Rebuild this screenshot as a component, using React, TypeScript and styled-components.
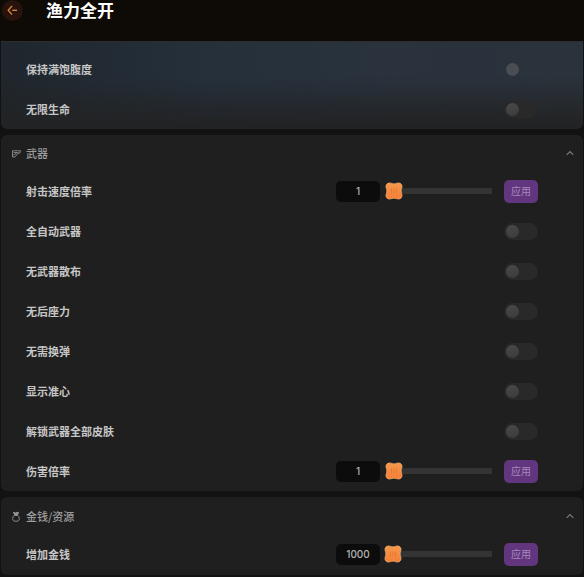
import React, { useId, useState } from 'react';
import styled, { createGlobalStyle } from 'styled-components';

const GlobalStyle = createGlobalStyle`
  * { box-sizing: border-box; }
  body {
    margin: 0;
    background: #121212;
    color: #c6c6c6;
    font-family: "Noto Sans CJK SC", sans-serif;
    font-size: 11px;
  }
  button, input { font: inherit; color: inherit; }
`;

const Page = styled.main`
  display: flex;
  flex-direction: column;
`;

const Header = styled.header`
  display: flex;
  align-items: flex-start;
  gap: 23px;
  height: 41px;
  padding-left: 2px;
  background: #0e0a06;
`;

const BackButton = styled.button`
  display: grid;
  place-items: center;
  width: 21px;
  height: 21px;
  padding: 0;
  border: 0;
  border-radius: 50%;
  background: #27120c;
  color: #d98038;
`;

const Title = styled.h1`
  margin: 0;
  color: #fff;
  font-size: 17px;
  font-weight: 700;
  line-height: 20px;
`;

const Panels = styled.div`
  display: flex;
  flex-direction: column;
  gap: 6px;
  padding: 0 1px 2px;
`;

const Panel = styled.section`
  border-radius: 6px;
  background: #1f1f1f;

  &:last-child { padding: 1px 0; }
`;

const GlowPanel = styled(Panel)`
  padding-top: 8px;
  border-radius: 0 0 6px 6px;
  background:
    linear-gradient(#2d2d2f, #2d2d2f) top / 100% 1px no-repeat,
    linear-gradient(to bottom, transparent 40%, #222324 95%),
    linear-gradient(to right, #1f262d, #25303b 35%, #29323d 65%, #2a323b);
`;

const PanelHeading = styled.h2`
  display: flex;
  align-items: center;
  height: 36px;
  margin: 0;
  padding: 0 9px 0 10px;
  color: #9c9c9c;
  font-size: 11px;
  font-weight: 500;
`;

const HeadingLabel = styled.span`
  flex: 1;
  margin-left: 5px;
`;

const CollapseButton = styled.button`
  display: grid;
  padding: 0;
  border: 0;
  background: none;
  color: #7d7d7d;
`;

const Row = styled.div`
  display: flex;
  align-items: center;
  justify-content: space-between;
  height: 40px;
  padding: 0 45px 0 25px;
`;

const RowLabel = styled.label`
  color: #c6c6c6;
  font-weight: 700;
  line-height: 16px;
`;

const Controls = styled.div`
  display: flex;
  align-items: center;
`;

const ValueInput = styled.input`
  width: 44px;
  height: 21px;
  padding: 0;
  border: 0;
  border-radius: 5px;
  background: #0c0c0c;
  color: #b4b4b4;
  font-family: Inter, sans-serif;
  font-size: 10px;
  font-weight: 500;
  text-align: center;
`;

const SliderBox = styled.div`
  position: relative;
  display: flex;
  align-items: center;
  width: 108px;
  height: 18px;
  margin: 0 12px 0 4px;
`;

const Range = styled.input`
  appearance: none;
  width: 100%;
  height: 18px;
  margin: 0;
  background: linear-gradient(#343434, #343434) right / 98px 6px no-repeat;

  &::-webkit-slider-thumb {
    appearance: none;
    width: 18px;
    height: 18px;
    background: transparent;
  }
`;

const Thumb = styled.svg`
  position: absolute;
  top: 0;
  pointer-events: none;
`;

const ApplyButton = styled.button`
  width: 34px;
  height: 23px;
  padding: 0;
  border: 0;
  border-radius: 5px;
  background: #61367f;
  color: #a988bb;
  font-size: 10px;
  line-height: 20px;
`;

const Switch = styled.input<{ $bare?: boolean }>`
  appearance: none;
  display: flex;
  align-items: center;
  width: 34px;
  height: 17px;
  margin: 0;
  padding: 0 2px;
  border-radius: 9px;
  background: ${({ $bare }) => ($bare ? 'transparent' : '#292929')};

  &::before {
    content: "";
    width: 13px;
    height: 13px;
    border-radius: 50%;
    background: ${({ $bare }) => ($bare ? '#4a4d51' : 'linear-gradient(160deg, #4a4a4b, #3b3b3c)')};
  }
  &:checked { justify-content: flex-end; }
`;

const BackIcon = () => (
  <svg width="11" height="11" viewBox="0 0 11 11" fill="none" stroke="currentColor" strokeWidth="1.4" aria-hidden="true">
    <path d="M5 1 1.2 5.2 5 9.6" />
    <path d="M5.2 5.3H10" />
  </svg>
);

const GunIcon = () => (
  <svg width="10" height="9" viewBox="0 0 10 9" fill="none" stroke="currentColor" strokeWidth=".8" aria-hidden="true">
    <path d="M1.5 1.8h8L9 3.9 6.8 4.500 4 8H1.5z" />
    <path d="M2.500 3.6h5M3.200 5.8 5.6 4M2.200 5.4v1.2" />
  </svg>
);

const MoneyIcon = () => (
  <svg width="10" height="11" viewBox="0 0 10 11" fill="none" stroke="currentColor" strokeWidth=".9" aria-hidden="true">
    <path d="M3.2 4.5C1.8 5.5 1.6 7 1.8 8.4 2 9.7 2.8 10.2 5 10.2s3-.5 3.2-1.8c.2-1.4 0-2.9-1.4-3.9z" />
    <path d="M2.6 1.2 4.4 2 7.4 1.2 6.9 3.4H3.3z" fill="currentColor" />
  </svg>
);

const ChevronIcon = () => (
  <svg width="8" height="6" viewBox="0 0 8 6" fill="none" stroke="currentColor" strokeWidth="1.1" aria-hidden="true">
    <path d="M.7 4.8 4 1.5l3.3 3.3" />
  </svg>
);

function SliderThumb({ percent }: { percent: number }) {
  const gradient = useId();
  return (
    <Thumb width="18" height="18" viewBox="0 0 18 18" style={{ left: `calc((100% - 18px) * ${percent / 100})` }} aria-hidden="true">
      <defs>
        <linearGradient id={gradient} x1="0" y1="0" x2="0" y2="1">
          <stop offset="0" stopColor="#f6984c" />
          <stop offset="1" stopColor="#f47f38" />
        </linearGradient>
      </defs>
      <path
        d="M4.3 1C6 .8 7 1.9 9 1.9S12 .8 13.7 1C15.8 1.2 17 2.6 17 4.5c0 1.7-.9 2.5-.9 4.5s.9 2.8.9 4.5c0 1.9-1.2 3.3-3.3 3.500-1.700.2-2.700-.9-4.700-.9S6 17.200 4.300 17C2.200 16.800 1 15.400 1 13.500c0-1.700.9-2.500.9-4.500S1 6.200 1 4.500C1 2.600 2.200 1.200 4.300 1z"
        fill={`url(#${gradient})`}
        stroke="#f8ae69"
        strokeWidth=".8"
      />
      <path d="M6.500 6.500v5M9 6.500v5M11.500 6.500v5" stroke="#e6762f" strokeWidth=".9" />
    </Thumb>
  );
}

function ToggleRow({ label, bare }: { label: string; bare?: boolean }) {
  const id = useId();
  return (
    <Row>
      <RowLabel htmlFor={id}>{label}</RowLabel>
      <Switch id={id} type="checkbox" role="switch" $bare={bare} />
    </Row>
  );
}

function SliderRow({ label, initial, percent }: { label: string; initial: string; percent: number }) {
  const id = useId();
  const [value, setValue] = useState(initial);
  const [position, setPosition] = useState(percent);
  return (
    <Row>
      <RowLabel htmlFor={id}>{label}</RowLabel>
      <Controls>
        <ValueInput id={id} type="text" inputMode="numeric" value={value} onChange={(e) => setValue(e.target.value)} />
        <SliderBox>
          <Range
            type="range"
            min={0}
            max={100}
            value={position}
            aria-label={label}
            onChange={(e) => {
              setPosition(Number(e.target.value));
              setValue(e.target.value);
            }}
          />
          <SliderThumb percent={position} />
        </SliderBox>
        <ApplyButton type="button">应用</ApplyButton>
      </Controls>
    </Row>
  );
}

function Heading({ icon, children }: { icon: React.ReactNode; children: string }) {
  return (
    <PanelHeading>
      {icon}
      <HeadingLabel>{children}</HeadingLabel>
      <CollapseButton type="button" aria-label={children}>
        <ChevronIcon />
      </CollapseButton>
    </PanelHeading>
  );
}

const weaponToggles = ['全自动武器', '无武器散布', '无后座力', '无需换弹', '显示准心', '解锁武器全部皮肤'];

export default function App() {
  return (
    <Page>
      <GlobalStyle />
      <Header>
        <BackButton type="button" aria-label="返回">
          <BackIcon />
        </BackButton>
        <Title>渔力全开</Title>
      </Header>
      <Panels>
        <GlowPanel>
          <ToggleRow label="保持满饱腹度" bare />
          <ToggleRow label="无限生命" />
        </GlowPanel>
        <Panel>
          <Heading icon={<GunIcon />}>武器</Heading>
          <SliderRow label="射击速度倍率" initial="1" percent={1} />
          {weaponToggles.map((label) => (
            <ToggleRow key={label} label={label} />
          ))}
          <SliderRow label="伤害倍率" initial="1" percent={1} />
        </Panel>
        <Panel>
          <Heading icon={<MoneyIcon />}>金钱/资源</Heading>
          <SliderRow label="增加金钱" initial="1000" percent={0} />
        </Panel>
      </Panels>
    </Page>
  );
}
